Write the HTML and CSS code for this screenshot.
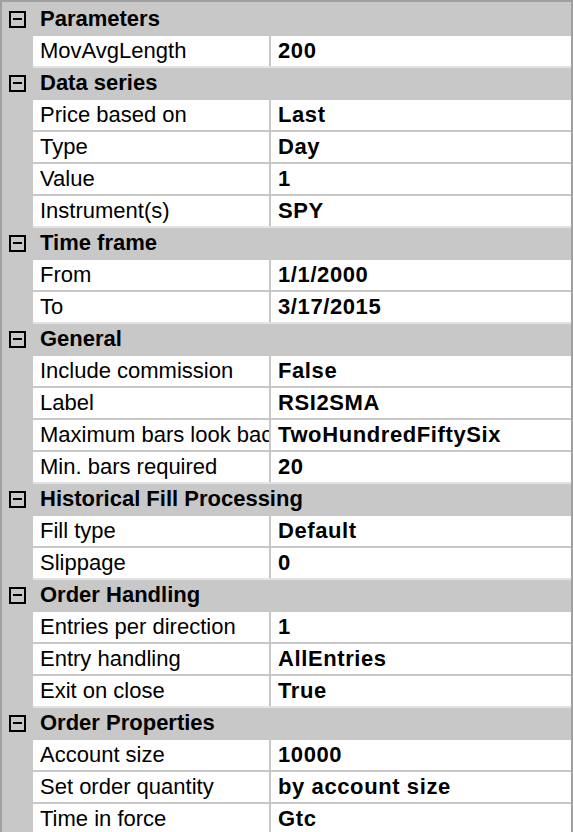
FILE: index.html
```html
<!DOCTYPE html>
<html>
<head>
<meta charset="utf-8">
<link rel="stylesheet" href="styles.css">
</head>
<body>
<div class="grid">
  <div class="cat first"><span class="gut"><span class="box"></span></span><span class="title">Parameters</span></div>
  <div class="row"><span class="gut"></span><span class="name">MovAvgLength</span><span class="val">200</span></div>

  <div class="cat"><span class="gut"><span class="box"></span></span><span class="title">Data series</span></div>
  <div class="row"><span class="gut"></span><span class="name">Price based on</span><span class="val">Last</span></div>
  <div class="row"><span class="gut"></span><span class="name">Type</span><span class="val">Day</span></div>
  <div class="row"><span class="gut"></span><span class="name">Value</span><span class="val">1</span></div>
  <div class="row"><span class="gut"></span><span class="name">Instrument(s)</span><span class="val">SPY</span></div>

  <div class="cat"><span class="gut"><span class="box"></span></span><span class="title">Time frame</span></div>
  <div class="row"><span class="gut"></span><span class="name">From</span><span class="val">1/1/2000</span></div>
  <div class="row"><span class="gut"></span><span class="name">To</span><span class="val">3/17/2015</span></div>

  <div class="cat"><span class="gut"><span class="box"></span></span><span class="title">General</span></div>
  <div class="row"><span class="gut"></span><span class="name">Include commission</span><span class="val">False</span></div>
  <div class="row"><span class="gut"></span><span class="name">Label</span><span class="val">RSI2SMA</span></div>
  <div class="row"><span class="gut"></span><span class="name">Maximum bars look back</span><span class="val">TwoHundredFiftySix</span></div>
  <div class="row"><span class="gut"></span><span class="name">Min. bars required</span><span class="val">20</span></div>

  <div class="cat"><span class="gut"><span class="box"></span></span><span class="title">Historical Fill Processing</span></div>
  <div class="row"><span class="gut"></span><span class="name">Fill type</span><span class="val">Default</span></div>
  <div class="row"><span class="gut"></span><span class="name">Slippage</span><span class="val">0</span></div>

  <div class="cat"><span class="gut"><span class="box"></span></span><span class="title">Order Handling</span></div>
  <div class="row"><span class="gut"></span><span class="name">Entries per direction</span><span class="val">1</span></div>
  <div class="row"><span class="gut"></span><span class="name">Entry handling</span><span class="val">AllEntries</span></div>
  <div class="row"><span class="gut"></span><span class="name">Exit on close</span><span class="val">True</span></div>

  <div class="cat"><span class="gut"><span class="box"></span></span><span class="title">Order Properties</span></div>
  <div class="row"><span class="gut"></span><span class="name">Account size</span><span class="val">10000</span></div>
  <div class="row"><span class="gut"></span><span class="name">Set order quantity</span><span class="val">by account size</span></div>
  <div class="row"><span class="gut"></span><span class="name">Time in force</span><span class="val">Gtc</span></div>
</div>
</body>
</html>
```
FILE: styles.css
```css
html, body {
  margin: 0;
  padding: 0;
  background: #c8c8c8;
}
.grid {
  width: 573px;
  height: 832px;
  box-sizing: border-box;
  border-top: 2px solid #a0a0a0;
  border-left: 2px solid #a0a0a0;
  border-right: 2px solid #a0a0a0;
  background: #c8c8c8;
  overflow: hidden;
  font-family: "Liberation Sans", Arial, sans-serif;
  font-size: 22px;
  color: #000;
}
.cat, .row {
  display: flex;
  height: 32px;
}
.gut {
  flex: 0 0 31px;
  display: flex;
  align-items: center;
  justify-content: center;
  border-top: 2px solid #c8c8c8;
  box-sizing: border-box;
}
.cat .title {
  flex: 1;
  border-top: 2px solid #e3e3e3;
  padding-left: 7px;
  line-height: 30px;
  font-weight: bold;
  white-space: nowrap;
}
.cat.first .title {
  border-top-color: #c8c8c8;
}
.box {
  width: 17px;
  height: 17px;
  box-sizing: border-box;
  border: 2px solid #000;
  display: flex;
  align-items: center;
  justify-content: center;
}
.box::after {
  content: "";
  width: 9px;
  height: 2px;
  background: #000;
}
.name {
  flex: 0 0 236px;
  box-sizing: border-box;
  background: #fff;
  border-top: 2px solid #c8c8c8;
  padding-left: 7px;
  line-height: 30px;
  white-space: nowrap;
  overflow: hidden;
}
.val {
  flex: 1;
  box-sizing: border-box;
  background: #fff;
  border-top: 2px solid #c8c8c8;
  border-left: 2px solid #c8c8c8;
  padding-left: 7px;
  line-height: 30px;
  font-weight: bold;
  letter-spacing: 0.6px;
  white-space: nowrap;
  overflow: hidden;
}
```
